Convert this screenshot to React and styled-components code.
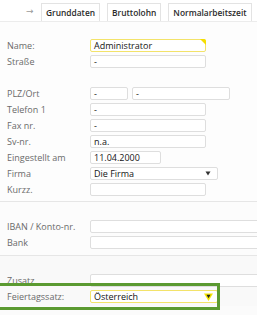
import React from "react";
import styled, { createGlobalStyle } from "styled-components";

const Global = createGlobalStyle`
  html, body { margin: 0; padding: 0; background: #fff; }
  body { font-family: "Open Sans", "Liberation Sans", sans-serif; font-size: 9px; }
  * { box-sizing: border-box; }
`;

const Page = styled.div`
  width: 257px;
  height: 315px;
  overflow: hidden;
  background: #fbfbfb;
`;

const TabBar = styled.div`
  height: 22px;
  display: flex;
  align-items: flex-start;
  gap: 7px;
  padding: 3px 0 0 26px;
  background: #fff;
  border-bottom: 1px solid #ececec;
`;

const Arrow = styled.span`
  width: 8px;
  height: 18px;
  line-height: 17px;
  color: #9a9a9a;
  font-size: 9px;
  font-family: "DejaVu Sans", sans-serif;
  margin-right: 0;
`;

const Tab = styled.div`
  height: 18px;
  padding: 0 4px;
  display: flex;
  align-items: center;
  border: 1px solid #e3e3e3;
  border-bottom: none;
  background: #fff;
  color: #2b2b2b;
  font-weight: 600;
  font-size: 8.4px;
  white-space: nowrap;
`;

const Section = styled.div`
  padding: ${(p) => p.$pt}px 0 ${(p) => p.$pb}px;
  border-top: ${(p) => (p.$line ? "1px solid #e6e6e6" : "none")};
  background: ${(p) => p.$bg || "transparent"};
`;

const Row = styled.div`
  position: relative;
  display: flex;
  align-items: flex-start;
  height: 16px;
  padding-left: 7px;
`;

const Label = styled.div`
  width: 83px;
  height: 13px;
  line-height: 13px;
  color: #6a6a6a;
  font-size: 9px;
  white-space: nowrap;
`;

const Fields = styled.div`
  display: flex;
  gap: 4px;
  flex: 1;
  min-width: 0;
`;

const Input = styled.div`
  position: relative;
  width: ${(p) => (p.$w ? `${p.$w}px` : "auto")};
  flex: ${(p) => (p.$w ? "none" : "1")};
  margin-right: ${(p) => (p.$w ? "0" : "-4px")};
  height: 13px;
  line-height: 11px;
  padding: 0 3px;
  border: 1px solid ${(p) => (p.$yellow ? "#f3e36a" : "#dedede")};
  border-radius: 2px;
  background: #fff;
  color: #141414;
  font-size: 9px;
  white-space: nowrap;
  display: flex;
  align-items: center;
  justify-content: space-between;
`;

const Corner = styled.span`
  position: absolute;
  top: -1px;
  right: -1px;
  width: 0;
  height: 0;
  border-top: 6px solid #f5de00;
  border-left: 6px solid transparent;
  border-top-right-radius: 2px;
`;

const Caret = styled.svg`
  flex: none;
  margin-right: ${(p) => p.$mr}px;
`;

const Highlight = styled.div`
  position: absolute;
  left: -5px;
  top: -7px;
  width: 225px;
  height: 27px;
  border: 3px solid #5b9a31;
  pointer-events: none;
`;

function Field({ label, children, extra }) {
  return (
    <Row>
      <Label>{label}</Label>
      <Fields>{children}</Fields>
      {extra}
    </Row>
  );
}

function DarkCaret() {
  return (
    <Caret $mr={3} width="6" height="5" viewBox="0 0 6 5">
      <path d="M0.5 0.5 H5.5 L3 4.5 Z" fill="#333" />
    </Caret>
  );
}

function YellowCaret() {
  return (
    <Caret $mr={1} width="9" height="8" viewBox="0 0 9 8">
      <path d="M0 0.5 H9 L4.5 8 Z" fill="#f7e600" />
      <path d="M2.5 1.8 H6.5 L4.5 5.3 Z" fill="#222" />
    </Caret>
  );
}

export default function App() {
  return (
    <Page>
      <Global />
      <TabBar>
        <Arrow>→</Arrow>
        <Tab>Grunddaten</Tab>
        <Tab>Bruttolohn</Tab>
        <Tab>Normalarbeitszeit</Tab>
      </TabBar>
      <Section $pt={17} $pb={2} $bg="#fdfdfd">
        <Field label="Name:">
          <Input $w={116} $yellow>
            Administrator
            <Corner />
          </Input>
        </Field>
        <Field label="Straße">
          <Input $w={116}>-</Input>
        </Field>
        <Row />
        <Field label="PLZ/Ort">
          <Input $w={38}>-</Input>
          <Input $w={98}>-</Input>
        </Field>
        <Field label="Telefon 1">
          <Input $w={116}>-</Input>
        </Field>
        <Field label="Fax nr.">
          <Input $w={116}>-</Input>
        </Field>
        <Field label="Sv-nr.">
          <Input $w={116}>n.a.</Input>
        </Field>
        <Field label="Eingestellt am">
          <Input $w={71}>11.04.2000</Input>
        </Field>
        <Field label="Firma">
          <Input $w={128}>
            Die Firma
            <DarkCaret />
          </Input>
        </Field>
        <Field label="Kurzz.">
          <Input $w={116} />
        </Field>
      </Section>
      <Section $line $pt={18} $pb={3} $bg="#fcfcfc">
        <Field label="IBAN / Konto-nr.">
          <Input />
        </Field>
        <Field label="Bank">
          <Input />
        </Field>
      </Section>
      <Section $line $pt={18} $pb={0} $bg="#f9f9f9">
        <Field label="Zusatz">
          <Input />
        </Field>
        <Field label="Feiertagssatz:" extra={<Highlight />}>
          <Input $w={128} $yellow>
            Österreich
            <YellowCaret />
          </Input>
        </Field>
      </Section>
    </Page>
  );
}
